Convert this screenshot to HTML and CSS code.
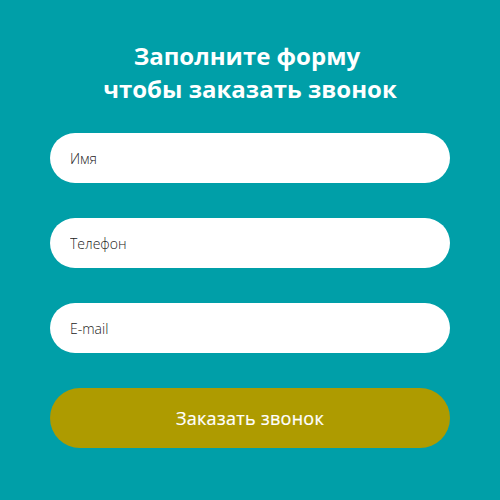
FILE: index.html
```html
<!DOCTYPE html>
<html lang="ru">
<head>
<meta charset="utf-8">
<link rel="stylesheet" href="styles.css">
</head>
<body>
<form class="form">
  <h1 class="title">Заполните форму&nbsp;<br>чтобы заказать звонок</h1>
  <div class="fields">
    <input class="field" type="text" placeholder="Имя">
    <input class="field" type="text" placeholder="Телефон">
    <input class="field" type="text" placeholder="E-mail">
    <button class="btn" type="button">Заказать звонок</button>
  </div>
</form>
</body>
</html>
```
FILE: styles.css
```css
html, body {
  margin: 0;
  padding: 0;
  height: 100%;
}
body {
  background: #009fa8;
  font-family: "Open Sans", "Liberation Sans", sans-serif;
}
.form {
  padding: 39px 50px 0;
  display: flex;
  flex-direction: column;
}
.title {
  margin: 0;
  color: #fff;
  font-size: 24px;
  font-weight: 700;
  line-height: 33px;
  text-align: center;
}
.fields {
  margin-top: 28px;
  display: flex;
  flex-direction: column;
  gap: 35px;
}
.field {
  height: 50px;
  box-sizing: border-box;
  border: none;
  border-radius: 25px;
  background: #fff;
  padding: 0 20px;
  font-family: "Open Sans", "Liberation Sans", sans-serif;
  font-size: 14px;
  font-weight: 300;
  color: #222;
  outline: none;
}
.field::placeholder {
  color: #222;
  opacity: 1;
}
.btn {
  height: 60px;
  border: none;
  border-radius: 30px;
  background: #ae9b00;
  color: #fff;
  font-family: "Open Sans", "Liberation Sans", sans-serif;
  font-size: 18px;
  font-weight: 500;
  letter-spacing: 0.3px;
  -webkit-text-stroke: 0.2px #fff;
  cursor: pointer;
}
```
